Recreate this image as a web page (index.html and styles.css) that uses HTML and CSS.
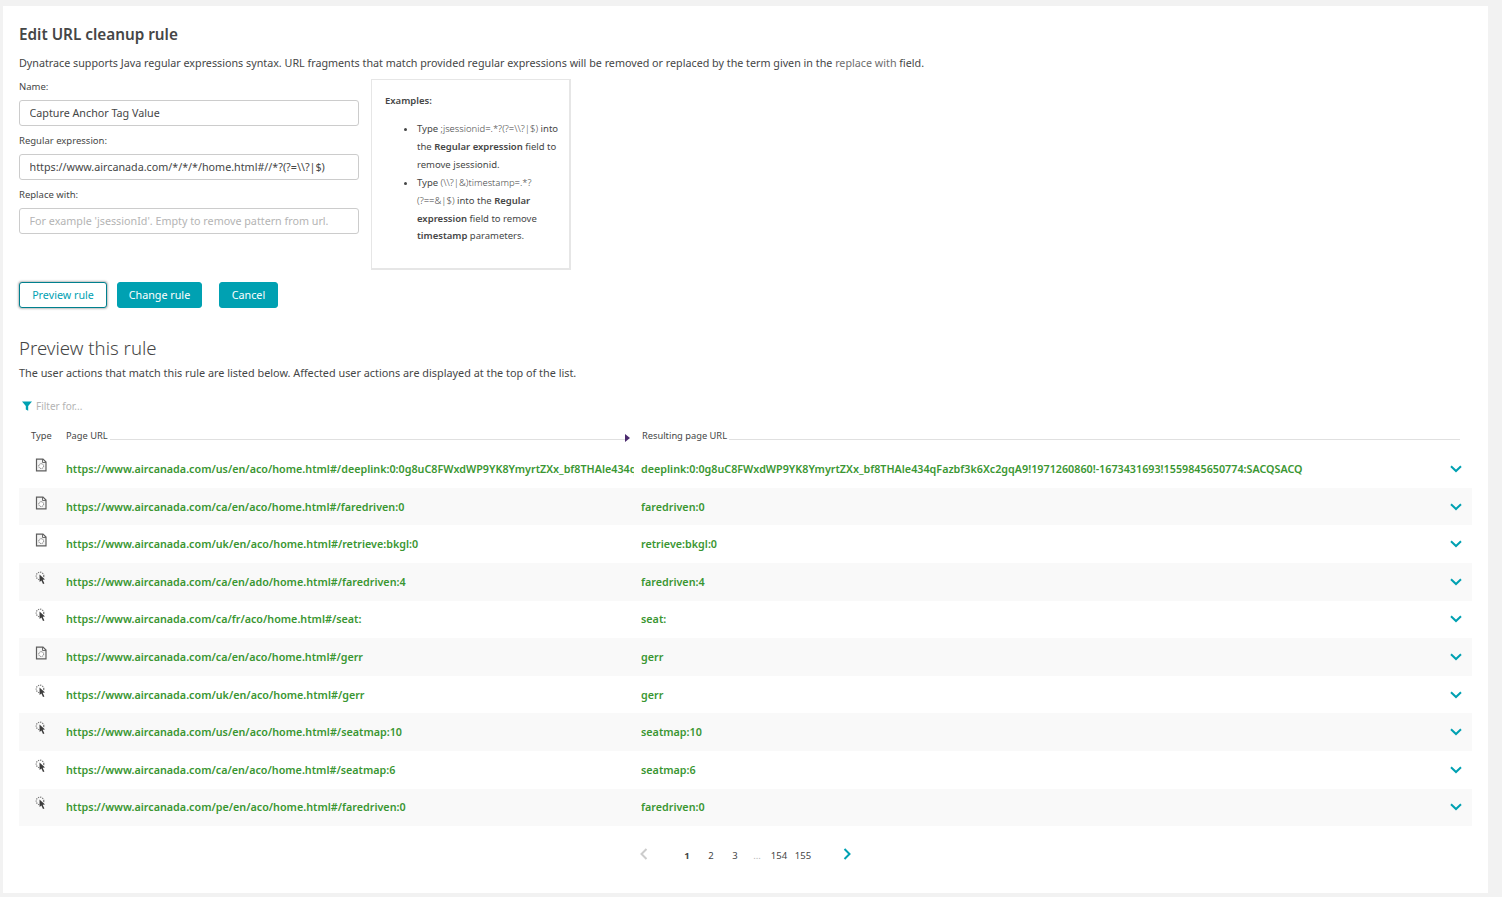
FILE: index.html
```html
<!DOCTYPE html>
<html lang="en">
<head>
<meta charset="utf-8">
<title>Edit URL cleanup rule</title>
<link rel="stylesheet" href="styles.css">
</head>
<body>
<svg class="defs" width="0" height="0" aria-hidden="true">
  <symbol id="doc" viewBox="0 0 12 13">
    <path d="M1.5.6H8L11 3.6V12.4H1.5Z" fill="#f4f4f4" stroke="#5f5f5f" stroke-width="1.2"/>
    <path d="M7.5.6V4H11" fill="none" stroke="#5f5f5f" stroke-width=".9"/>
    <circle cx="6.2" cy="7.6" r="2.4" fill="#fff" stroke="#777" stroke-dasharray="1.1 .6"/>
  </symbol>
  <symbol id="click" viewBox="0 0 12 14">
    <circle cx="5" cy="5" r="3.8" fill="none" stroke="#777" stroke-width="1.2" stroke-dasharray="1.2 1"/>
    <path d="M4.5 3.5 10 8.5 7.7 8.8 9.4 12.4 8 13 6.4 9.5 4.6 11Z" fill="#3d3d3d"/>
  </symbol>
</svg>
<main class="card">
  <h1 class="title">Edit URL cleanup rule</h1>
  <p class="intro">Dynatrace supports Java regular expressions syntax. URL fragments that match provided regular expressions will be removed or replaced by the term given in the <span class="muted">replace with</span> field.</p>
  <div class="form-row">
    <div class="fields">
      <label class="label">Name:</label>
      <input class="input" value="Capture Anchor Tag Value">
      <label class="label">Regular expression:</label>
      <input class="input" value="https://www.aircanada.com/*/*/*/home.html#//*?(?=\\?|$)">
      <label class="label">Replace with:</label>
      <input class="input" placeholder="For example 'jsessionId'. Empty to remove pattern from url.">
    </div>
    <aside class="examples">
      <div class="examples-title">Examples:</div>
      <ul class="examples-list">
        <li>Type <span class="thin">;jsessionid=.*?(?=\\?|$)</span> into the <b>Regular expression</b> field to remove jsessionid.</li>
        <li>Type <span class="thin">(\\?|&amp;)timestamp=.*?<br>(?==&amp;|$)</span> into the <b>Regular expression</b> field to remove <b>timestamp</b> parameters.</li>
      </ul>
    </aside>
  </div>
  <div class="buttons">
    <button class="btn btn-outline">Preview rule</button>
    <button class="btn btn-change">Change rule</button>
    <button class="btn btn-cancel">Cancel</button>
  </div>
  <h2 class="subtitle">Preview this rule</h2>
  <p class="sub-intro">The user actions that match this rule are listed below. Affected user actions are displayed at the top of the list.</p>
  <div class="filter">
    <svg class="filter-icon" viewBox="0 0 10 10"><path d="M0 .5H10L6.2 5V9.8L3.8 8.4V5Z" fill="#00a1b2"/></svg>
    <span>Filter for...</span>
  </div>
  <div class="thead">
    <span class="th-type">Type</span>
    <span class="th-url">Page URL</span>
    <span class="rule rule-url"></span>
    <span class="sort"></span>
    <span class="th-result">Resulting page URL</span>
    <span class="rule"></span>
  </div>
  <div class="rows">
    <div class="row"><svg class="ico"><use href="#doc"/></svg><a class="url">https://www.aircanada.com/us/en/aco/home.html#/deeplink:0:0g8uC8FWxdWP9YK8YmyrtZXx_bf8THAle434qFazbf3k6Xc2gqA9!1971260860!-1673431693!1559845650774:SACQSACQ</a><a class="res">deeplink:0:0g8uC8FWxdWP9YK8YmyrtZXx_bf8THAle434qFazbf3k6Xc2gqA9!1971260860!-1673431693!1559845650774:SACQSACQ</a><svg class="chev" viewBox="0 0 12 8"><path d="M1 1.2 6 6 11 1.2" /></svg></div>
    <div class="row"><svg class="ico"><use href="#doc"/></svg><a class="url">https://www.aircanada.com/ca/en/aco/home.html#/faredriven:0</a><a class="res">faredriven:0</a><svg class="chev" viewBox="0 0 12 8"><path d="M1 1.2 6 6 11 1.2" /></svg></div>
    <div class="row"><svg class="ico"><use href="#doc"/></svg><a class="url">https://www.aircanada.com/uk/en/aco/home.html#/retrieve:bkgl:0</a><a class="res">retrieve:bkgl:0</a><svg class="chev" viewBox="0 0 12 8"><path d="M1 1.2 6 6 11 1.2" /></svg></div>
    <div class="row"><svg class="ico"><use href="#click"/></svg><a class="url">https://www.aircanada.com/ca/en/ado/home.html#/faredriven:4</a><a class="res">faredriven:4</a><svg class="chev" viewBox="0 0 12 8"><path d="M1 1.2 6 6 11 1.2" /></svg></div>
    <div class="row"><svg class="ico"><use href="#click"/></svg><a class="url">https://www.aircanada.com/ca/fr/aco/home.html#/seat:</a><a class="res">seat:</a><svg class="chev" viewBox="0 0 12 8"><path d="M1 1.2 6 6 11 1.2" /></svg></div>
    <div class="row"><svg class="ico"><use href="#doc"/></svg><a class="url">https://www.aircanada.com/ca/en/aco/home.html#/gerr</a><a class="res">gerr</a><svg class="chev" viewBox="0 0 12 8"><path d="M1 1.2 6 6 11 1.2" /></svg></div>
    <div class="row"><svg class="ico"><use href="#click"/></svg><a class="url">https://www.aircanada.com/uk/en/aco/home.html#/gerr</a><a class="res">gerr</a><svg class="chev" viewBox="0 0 12 8"><path d="M1 1.2 6 6 11 1.2" /></svg></div>
    <div class="row"><svg class="ico"><use href="#click"/></svg><a class="url">https://www.aircanada.com/us/en/aco/home.html#/seatmap:10</a><a class="res">seatmap:10</a><svg class="chev" viewBox="0 0 12 8"><path d="M1 1.2 6 6 11 1.2" /></svg></div>
    <div class="row"><svg class="ico"><use href="#click"/></svg><a class="url">https://www.aircanada.com/ca/en/aco/home.html#/seatmap:6</a><a class="res">seatmap:6</a><svg class="chev" viewBox="0 0 12 8"><path d="M1 1.2 6 6 11 1.2" /></svg></div>
    <div class="row"><svg class="ico"><use href="#click"/></svg><a class="url">https://www.aircanada.com/pe/en/aco/home.html#/faredriven:0</a><a class="res">faredriven:0</a><svg class="chev" viewBox="0 0 12 8"><path d="M1 1.2 6 6 11 1.2" /></svg></div>
  </div>
  <nav class="pager">
    <svg class="page-arrow arrow-prev" viewBox="0 0 8 12"><path d="M6.5 1 1.5 6 6.5 11"/></svg>
    <span class="num cur">1</span><span class="num">2</span><span class="num">3</span><span class="num dots">...</span><span class="num">154</span><span class="num">155</span>
    <svg class="page-arrow arrow-next" viewBox="0 0 8 12"><path d="M1.5 1 6.5 6 1.5 11"/></svg>
  </nav>
</main>
</body>
</html>
```
FILE: styles.css
```css
* { box-sizing: border-box; }
html, body { margin: 0; height: 100%; }
body {
  background: #f2f2f2;
  padding: 6px 14px 4px 3px;
  font-family: "Noto Sans", "Open Sans", sans-serif;
  font-size: 10.74px;
  color: #454646;
  overflow: hidden;
}
.defs { position: absolute; }
.card { background: #fff; height: 887px; padding: 18px 16px 0; }
.title { margin: 0; font-size: 15.3px; line-height: 20px; font-weight: 600; color: #454646; }
.intro { margin: 11px 0 0; line-height: 16px; }
.muted { color: #6d6d6d; }
.form-row { display: flex; gap: 12px; margin-top: 8px; height: 191px; }
.fields { width: 340px; display: flex; flex-direction: column; padding-top: 1px; }
.label { font-size: 9.5px; line-height: 14px; margin-top: 8px; margin-bottom: 6px; }
.label:first-child { margin-top: 0; }
.input {
  height: 26px; width: 100%; padding: 0 9.5px; border: 1px solid #ccc; border-radius: 3px;
  font: 10.74px "Noto Sans", sans-serif; color: #454646; background: #fff; outline: 0;
}
.input::placeholder { color: #b4b4b4; opacity: 1; }
.examples {
  width: 200px; height: 191px; border: 1px solid #e6e6e6; border-bottom-width: 2px; border-right-width: 2px;
  padding: 14px 8px 0 13px; font-size: 9.5px;
}
.examples-title { font-weight: 600; line-height: 14px; }
.examples-list { margin: 12px 0 0; padding-left: 32px; line-height: 17.9px; }
.examples-list b { font-weight: 600; }
.thin { font-weight: 300; }
.buttons { display: flex; margin-top: 12px; }
.btn {
  height: 26px; border: 1px solid #00a1b2; border-radius: 3px; padding: 0;
  background: #00a1b2; color: #fff; font: 10.74px "Noto Sans", sans-serif;
}
.btn-outline { width: 88px; background: #fff; color: #00a1b2; border-color: #00808e; box-shadow: 0 0 2px 1px #bbb; }
.btn-change { width: 85px; margin-left: 10px; }
.btn-cancel { width: 59px; margin-left: 17px; }
.subtitle { margin: 28px 0 0; font-size: 18.6px; line-height: 24px; font-weight: 300; color: #454646; }
.sub-intro { margin: 5px 0 0; line-height: 16px; font-size: 10.85px; }
.filter { display: flex; align-items: center; gap: 4px; margin: 17px 0 0 3px; height: 16px; color: #b4b4b4; font-size: 10px; }
.filter-icon { width: 10px; height: 10px; }
.thead { display: flex; align-items: flex-start; margin: 15px 12px 0 0; height: 21.2px; font-size: 9.3px; line-height: 14px; }
.th-type { margin-left: 12px; width: 35px; }
.th-url { white-space: nowrap; width: 44px; }
.rule { flex: 1; height: 1px; background: #e0e0e0; margin: 10px 0 0 2px; }
.rule-url { flex: 0 0 515px; margin-left: 0; }
.sort { width: 0; height: 0; margin: 5px 12px 0 0; border-left: 5px solid #4b2a6e; border-top: 4px solid transparent; border-bottom: 4px solid transparent; }
.th-result { white-space: nowrap; }
.rows { display: flex; flex-direction: column; }
.row {
  display: grid; grid-template-columns: 47px 575px 1fr 32px; align-items: center;
  height: 37.6px; font-weight: 600; font-size: 10.74px; letter-spacing: .01px;
}
.row:nth-child(even) { background: #f9f9f9; }
.ico { width: 12px; height: 14px; margin-left: 16px; margin-top: -8px; }
.url { color: #3a9632; white-space: nowrap; overflow: hidden; margin-right: 7px; }
.res { color: #3a9632; white-space: nowrap; overflow: hidden; }
.chev { width: 12px; height: 8px; margin-left: 10px; fill: none; stroke: #00a1b2; stroke-width: 2; }
.pager { display: flex; align-items: center; height: 58.4px; padding-left: 621px; font-size: 9.5px; color: #454646; }
.page-arrow { width: 8px; height: 12px; fill: none; stroke-width: 2; margin-top: -2px; }
.arrow-prev { stroke: #ccc; margin-right: 27px; }
.arrow-next { stroke: #00a1b2; margin-left: 28px; }
.num { min-width: 24px; text-align: center; }
.cur { font-weight: 700; }
.dots { color: #b4b4b4; min-width: 20px; }
```
